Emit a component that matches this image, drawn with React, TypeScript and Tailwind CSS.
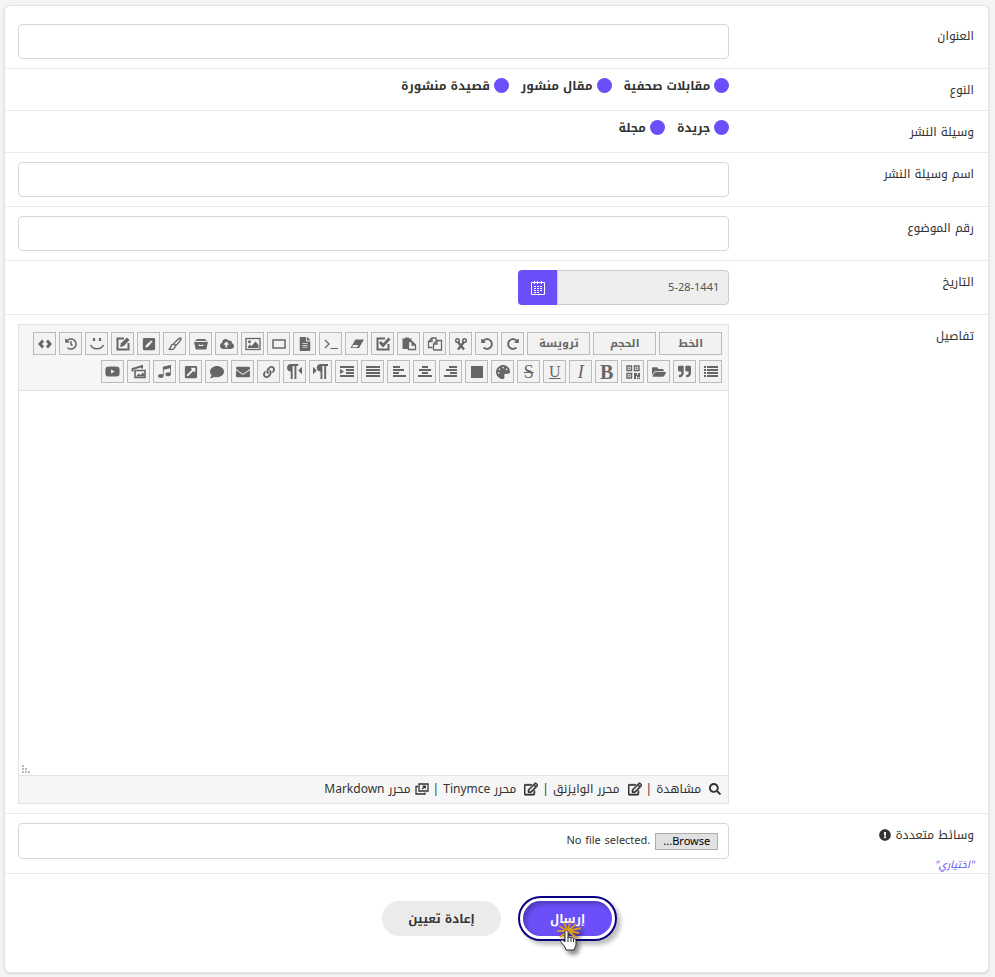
import type { ReactNode } from "react";
import {
  FaCloudUploadAlt,
  FaComment,
  FaEnvelope,
  FaExclamationCircle,
  FaExternalLinkSquareAlt,
  FaFileAlt,
  FaFolderOpen,
  FaHistory,
  FaLink,
  FaPalette,
  FaPenSquare,
  FaQuoteRight,
  FaRedoAlt,
  FaRegEdit,
  FaSearch,
  FaUndoAlt,
  FaYoutube,
} from "react-icons/fa";
import { ImLtr, ImMusic, ImRtl } from "react-icons/im";

function Glyph({ children }: { children: ReactNode }) {
  return (
    <svg viewBox="0 0 16 16" width="16" height="16" fill="none" stroke="currentColor" strokeWidth="1.5">
      {children}
    </svg>
  );
}

// Horizontal strokes of an alignment icon, as [x, width] from top to bottom
function Lines({ rows, children }: { rows: [number, number][]; children?: ReactNode }) {
  return (
    <Glyph>
      <g fill="currentColor" stroke="none">
        {rows.map(([x, w], i) => (
          <rect key={i} x={x} y={2 + i * 3} width={w} height="2" />
        ))}
        {children}
      </g>
    </Glyph>
  );
}

const topTools: [string, ReactNode][] = [
  ["إعادة", <FaRedoAlt size={12} />],
  ["تراجع", <FaUndoAlt size={12} />],
  [
    "قص",
    <Glyph>
      <circle cx="4.5" cy="4.500" r="1.800" />
      <circle cx="11.5" cy="4.500" r="1.800" />
      <path d="M5 6 11 13.500M11 6 5 13.500" strokeWidth="2.4" />
    </Glyph>,
  ],
  [
    "نسخ",
    <Glyph>
      <path
        d="M5.500 11.500H1.500V5.500L5 2H9V4.500M5 2V5.500H1.500M6.500 14V8L10 4.500H14.500V14H6.500M10 4.500V8H6.500"
        strokeWidth="1.3"
      />
    </Glyph>,
  ],
  [
    "لصق",
    <Glyph>
      <path d="M1.500 2.500H4V1.500H8V2.500H10.500V5H7V13H1.500Z" fill="currentColor" stroke="none" />
      <path d="M7.500 5.500H11L14.500 9V13.500H7.500ZM11 5.500V9H14.500" strokeWidth="1.3" />
    </Glyph>,
  ],
  [
    "تحديد الكل",
    <Glyph>
      <path d="M10 2.500H2.500V13.500H13.500V8" strokeWidth="2" />
      <path d="m5 6 3 3.500L14.500 2.500" strokeWidth="2.800" />
    </Glyph>,
  ],
  [
    "مسح التنسيق",
    <Glyph>
      <path d="M6.500 3.500H15L10 12H1.500Z" fill="currentColor" stroke="none" />
      <path d="M4.200 9H9.300L8 11.200H3Z" fill="#f2f2f2" stroke="none" />
    </Glyph>,
  ],
  [
    "شفرة",
    <Glyph>
      <path d="m2 4 4 4-4 4M7.500 12.500H15" strokeWidth="1.2" />
    </Glyph>,
  ],
  ["مستند", <FaFileAlt size={14} />],
  [
    "إطار",
    <Glyph>
      <rect x="2" y="4" width="12" height="8" />
    </Glyph>,
  ],
  [
    "صورة",
    <Glyph>
      <rect x="1" y="2.500" width="14" height="11" strokeWidth="1.3" />
      <circle cx="4.500" cy="5.700" r="1.500" fill="currentColor" stroke="none" />
      <path d="M3 12V10.500l2-2L6.500 10 10.500 5.500 13.500 9v3Z" fill="currentColor" stroke="none" />
    </Glyph>,
  ],
  ["رفع", <FaCloudUploadAlt size={14} />],
  [
    "أرشيف",
    <Glyph>
      <path d="M4 3h8l2 2H2Z" fill="currentColor" stroke="none" />
      <path d="M1 5.800h14L13.500 12.500c0 .6-.5 1-1 1h-9c-.5 0-1-.4-1-1Z" fill="currentColor" stroke="none" />
      <path d="M6 8.500v1h4v-1M2 5.400h12" stroke="#f2f2f2" strokeWidth="1" />
    </Glyph>,
  ],
  [
    "فرشاة",
    <Glyph>
      <path d="M13.800 2.200c1 1-3.300 6.300-5.300 7.300L6.800 8c1-2 6-6.800 7-5.800Z" strokeWidth="1.4" />
      <path d="M6.800 8.300c-2-.5-2.500.7-2.900 2.200-.3 1.300-.8 2-1.800 2.700 2.700 1 6 0 6.200-3.200" strokeWidth="1.4" />
    </Glyph>,
  ],
  ["توقيع", <FaPenSquare size={14} />],
  [
    "تحرير",
    <Glyph>
      <path d="M9 2.500H2.500V13.500H13.500V7" strokeWidth="2" />
      <path d="m5 11 1-3.800L12 1.500l2.500 2.500-5.700 5.900Z" fill="currentColor" stroke="none" />
    </Glyph>,
  ],
  [
    "ابتسامة",
    <Glyph>
      <path d="M5 2v3M11 2v3" strokeWidth="2.200" />
      <path d="M1.500 9c2.500 5 10.500 5 13 0" strokeWidth="1.600" />
    </Glyph>,
  ],
  ["السجل", <FaHistory size={12} />],
  [
    "المصدر",
    <Glyph>
      <path
        d="M5 3.500 7 5.500 5 8 7 10.500 5 12.500 1 8ZM11 3.500 9 5.500 11 8 9 10.500 11 12.500 15 8Z"
        fill="currentColor"
        stroke="none"
      />
    </Glyph>,
  ],
];

const bottomTools: [string, ReactNode][] = [
  [
    "قائمة",
    <Lines rows={[[4, 11], [4, 11], [4, 11], [4, 11]]}>
      <path d="M1 2h2v2H1zM1 5h2v2H1zM1 8h2v2H1zM1 11h2v2H1z" />
    </Lines>,
  ],
  ["اقتباس", <FaQuoteRight size={13} />],
  ["مجلد", <FaFolderOpen size={14} />],
  [
    "رمز الاستجابة",
    <Glyph>
      <path d="M2 2h4.500v4.500H2ZM9.500 2H14v4.500H9.500ZM2 9.500h4.500V14H2Z" strokeWidth="1.4" />
      <path
        d="M3.500 3.500h1.500v1.500H3.500zM11 3.500h1.500v1.500H11zM3.500 11h1.500v1.500H3.500zM9 9h3v2h1V9h2v4h-3v-1h-1v3H9zM12 13.500h1.500V15H12zM14 13.500h1V15h-1z"
        fill="currentColor"
        stroke="none"
      />
    </Glyph>,
  ],
  ["عريض", <span className="font-['Liberation_Serif',serif] text-[20px] font-bold">B</span>],
  ["مائل", <span className="font-['Liberation_Serif',serif] text-[18px] italic">I</span>],
  ["تسطير", <span className="font-['Liberation_Serif',serif] text-[16px] underline">U</span>],
  ["يتوسطه خط", <span className="font-['Liberation_Serif',serif] text-[18px] line-through">S</span>],
  ["لون الخط", <FaPalette size={14} />],
  [
    "لون الخلفية",
    <Glyph>
      <rect x="2" y="2" width="12" height="12" fill="currentColor" stroke="none" />
    </Glyph>,
  ],
  ["محاذاة لليمين", <Lines rows={[[6, 8], [3, 11], [7, 7], [1, 13]]} />],
  ["توسيط", <Lines rows={[[5, 6], [2, 12], [5, 6], [1, 14]]} />],
  ["محاذاة لليسار", <Lines rows={[[2, 7], [2, 11], [2, 6], [2, 13]]} />],
  ["ضبط", <Lines rows={[[1, 14], [1, 14], [1, 14], [1, 14]]} />],
  [
    "مسافة بادئة",
    <Lines rows={[[1, 14], [7, 8], [7, 8], [1, 14]]}>
      <path d="m1 5 4 2.500L1 10Z" />
    </Lines>,
  ],
  ["من اليسار", <ImLtr size={15} />],
  ["من اليمين", <ImRtl size={15} />],
  ["رابط", <FaLink size={12} />],
  ["بريد", <FaEnvelope size={14} />],
  ["تعليق", <FaComment size={14} />],
  ["رابط خارجي", <FaExternalLinkSquareAlt size={14} />],
  ["صوت", <ImMusic size={13} />],
  [
    "معرض",
    <Glyph>
      <path d="M1.500 7.500V5L11 2V4.500" strokeWidth="2" />
      <path d="M4 6.500H14V13.500H4Z" strokeWidth="1.600" />
      <path d="m5 12.500 2.500-3 2 1.500L12 8.500l1.500 2v2Z" fill="currentColor" stroke="none" />
    </Glyph>,
  ],
  ["فيديو", <FaYoutube size={15} />],
];

function Tool({ label, children }: { label: string; children: ReactNode }) {
  return (
    <button
      type="button"
      aria-label={label}
      className="flex h-[23px] w-[23px] items-center justify-center border border-[#bbb] bg-[#f2f2f2]"
    >
      {children}
    </button>
  );
}

function Row({ label, htmlFor, first, children }: { label: string; htmlFor?: string; first?: boolean; children: ReactNode }) {
  return (
    <div className={`flex border-b border-[#ebebeb] pb-[9px] ${first ? "pt-[18px]" : "pt-[9px]"}`}>
      <div className="w-1/4 px-3.5 pt-0.5">
        {htmlFor ? <label htmlFor={htmlFor}>{label}</label> : label}
      </div>
      <div className="w-3/4 px-[13px]">{children}</div>
    </div>
  );
}

function Radios({ name, options }: { name: string; options: string[] }) {
  return (
    <div className="flex h-[23px] items-start gap-3 font-bold">
      {options.map((option) => (
        <label key={option} className="flex items-start gap-1">
          <input type="radio" name={name} className="h-[15px] w-[15px] appearance-none rounded-full bg-[#6b4ff8]" />
          <span className="-mt-0.5 leading-5">{option}</span>
        </label>
      ))}
    </div>
  );
}

const field = "block h-[35px] w-full rounded border border-[#d8d8d8] bg-white px-3 outline-none";

export default function App() {
  return (
    <div
      dir="rtl"
      className="min-h-screen bg-[#f4f4f4] pt-[5px] pr-1.5 pb-1 pl-1 font-['Droid_Arabic_Kufi','Noto_Kufi_Arabic','Noto_Sans','DejaVu_Sans',sans-serif] text-[12px] leading-5 text-[#333]"
    >
      <form className="rounded-md border border-[#e4e4e4] bg-white shadow-sm" onSubmit={(e) => e.preventDefault()}>
        <Row label="العنوان" htmlFor="title" first>
          <input id="title" type="text" className={field} />
        </Row>
        <Row label="النوع">
          <Radios name="kind" options={["مقابلات صحفية", "مقال منشور", "قصيدة منشورة"]} />
        </Row>
        <Row label="وسيلة النشر">
          <Radios name="medium" options={["جريدة", "مجلة"]} />
        </Row>
        <Row label="اسم وسيلة النشر" htmlFor="medium-name">
          <input id="medium-name" type="text" className={field} />
        </Row>
        <Row label="رقم الموضوع" htmlFor="topic">
          <input id="topic" type="text" className={field} />
        </Row>
        <Row label="التاريخ" htmlFor="date">
          <div className="flex w-[211px]">
            <input
              id="date"
              type="text"
              readOnly
              defaultValue="5-28-1441"
              className="h-[35px] min-w-0 flex-1 rounded-r border border-[#ccc] bg-[#eee] px-[9px] text-[11px] text-[#555] outline-none"
            />
            <button
              type="button"
              aria-label="اختر التاريخ"
              className="flex w-[39px] items-center justify-center rounded-l bg-[#6b4ff8] text-white"
            >
              <svg viewBox="0 0 14 14" width="14" height="14" fill="none" stroke="currentColor">
                <path d="M.5 1.500H13.500V13.500H.5ZM3.500 0V3M6.500 0V3M10.500 0V3" />
                <path d="M3 5.500h8.500M3 7.500h8.500M3 9.500h8.500M3 11.500h5" strokeDasharray="2 1" />
              </svg>
            </button>
          </div>
        </Row>
        <Row label="تفاصيل" htmlFor="details">
          <div className="border border-[#e2e2e2]">
            <div className="flex flex-col gap-[5px] border-b border-[#e2e2e2] bg-[#f6f6f6] py-[7px] pr-1.5 text-[#666]">
              <div className="flex gap-[3px]">
                {["الخط", "الحجم", "ترويسة"].map((name) => (
                  <button
                    key={name}
                    type="button"
                    className="h-[23px] w-[63px] border border-[#bbb] bg-[#f2f2f2] text-[11px] leading-4 font-bold"
                  >
                    {name}
                  </button>
                ))}
                {topTools.map(([label, icon]) => (
                  <Tool key={label} label={label}>{icon}</Tool>
                ))}
              </div>
              <div className="flex gap-[3px]">
                {bottomTools.map(([label, icon]) => (
                  <Tool key={label} label={label}>{icon}</Tool>
                ))}
              </div>
            </div>
            <div className="relative">
              <textarea id="details" className="block h-96 w-full resize-none bg-white p-2 outline-none" />
              <svg className="absolute bottom-0.5 left-[3px]" width="8" height="8" fill="#bbb">
                <path d="M0 0h2v2H0zM0 3h2v2H0zM3 3h2v2H3zM0 6h2v2H0zM3 6h2v2H3zM6 6h2v2H6z" />
              </svg>
            </div>
            <div className="flex h-7 items-center gap-1 border-t border-[#e2e2e2] bg-[#f6f6f6] px-[7px] pb-0.5">
              <a href="#preview" className="flex items-center gap-2">
                <FaSearch size={12} />
                مشاهدة
              </a>
              |
              <a href="#wysiwyg" className="flex items-center gap-2">
                <FaRegEdit size={14} stroke="currentColor" strokeWidth={24} />
                محرر الوايزنق
              </a>
              |
              <a href="#tinymce" className="flex items-center gap-2">
                <FaRegEdit size={14} stroke="currentColor" strokeWidth={24} />
                محرر Tinymce
              </a>
              |
              <a href="#markdown" className="flex items-center gap-1">
                <svg viewBox="0 0 14 12" width="14" height="12" fill="none" stroke="currentColor" strokeWidth="1.300">
                  <path d="M4 1H13V8H4ZM3 3.500H1V11H10V9.500M7 6 10 3.500M7.500 3.200H10.300V5.500" />
                </svg>
                محرر Markdown
              </a>
            </div>
          </div>
        </Row>
        <div className="flex h-[60px] border-b border-[#ebebeb] pt-[9px]">
          <div className="w-1/4 px-3.5 pt-0.5">
            <label htmlFor="media" className="flex items-center gap-1">
              وسائط متعددة
              <FaExclamationCircle size={12} />
            </label>
            <p className="pt-2.5 text-[10px] leading-5 text-[#6b4ff8] italic">"اختياري"</p>
          </div>
          <div className="w-3/4 px-[13px]">
            <label htmlFor="media" className="flex h-9 items-center gap-[5px] rounded border border-[#d8d8d8] px-2.5 text-[11px]">
              <input id="media" type="file" className="sr-only" />
              <span className="h-[17px] w-[63px] border border-[#adadad] bg-[#e1e1e1] text-center leading-4 text-black">Browse...</span>
              <span dir="ltr">No file selected.</span>
            </label>
          </div>
        </div>
        <div className="flex h-[98px] items-start justify-center gap-[17px] pt-[22px] pl-1.5 text-[12px] font-bold">
          <div className="relative rounded-full border-2 border-[#0b0080] bg-white p-[3px] shadow-[4px_4px_4px_rgba(0,0,0,0.25)]">
            <button type="submit" className="block h-[35px] w-[89px] rounded-full bg-[#6b4ff8] text-white shadow-[inset_3px_3px_4px_rgba(0,0,0,0.25)]">
              إرسال
            </button>
            <svg
              className="absolute top-6 left-9 drop-shadow-[3px_4px_2px_rgba(0,0,0,0.45)]"
              width="26"
              height="30"
              viewBox="0 0 26 30"
            >
              <path
                d="M12 9 3 4M12 9 1 9M12 9 4 15M12 9 8 1M12 9 14 0M12 9 20 2M12 9 25 6M12 9 23 11M12 9 21 16M12 9 8 16"
                stroke="#d99a1e"
                strokeWidth="1.8"
              />
              <path
                d="M9 10c0-2 3-2 3 0v6c1-1 3-1 3 0 1-1 2.500 0 2.500 1 1-1 2.500 0 2.500 2v4l-2 5H10l-1-3-4-5c-1-2 1-3 4 0Z"
                fill="#fff"
                stroke="#333"
              />
              <path d="M12 15v5M15 16v4M17.500 17v3" stroke="#333" />
            </svg>
          </div>
          <button type="reset" className="mt-[5px] h-[35px] w-[119px] rounded-full bg-[#ebebeb]">
            إعادة تعيين
          </button>
        </div>
      </form>
    </div>
  );
}
